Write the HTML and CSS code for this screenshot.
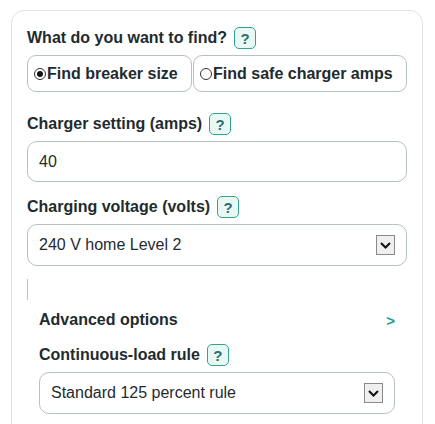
FILE: index.html
```html
<!DOCTYPE html>
<html lang="en">
<head>
<meta charset="utf-8">
<title>Breaker size calculator</title>
<link rel="stylesheet" href="styles.css">
</head>
<body>
<div class="card">
  <div class="label-row">
    <span class="label">What do you want to find?</span>
    <span class="help">?</span>
  </div>
  <div class="choices">
    <label class="choice"><span class="radio checked"></span>Find breaker size</label>
    <label class="choice"><span class="radio"></span>Find safe charger amps</label>
  </div>

  <div class="label-row gap-top-lg">
    <span class="label">Charger setting (amps)</span>
    <span class="help">?</span>
  </div>
  <div class="field">40</div>

  <div class="label-row gap-top">
    <span class="label">Charging voltage (volts)</span>
    <span class="help">?</span>
  </div>
  <div class="field select">
    <span>240 V home Level 2</span>
    <span class="arrow"><svg width="11" height="7" viewBox="0 0 11 7"><path d="M1 1 L5.5 5.5 L10 1" fill="none" stroke="#111" stroke-width="2"/></svg></span>
  </div>

  <div class="divider"></div>

  <div class="advanced">
    <div class="adv-head">
      <span class="label">Advanced options</span>
      <span class="chev">&gt;</span>
    </div>
    <div class="label-row adv-label">
      <span class="label">Continuous-load rule</span>
      <span class="help">?</span>
    </div>
    <div class="field select">
      <span>Standard 125 percent rule</span>
      <span class="arrow"><svg width="11" height="7" viewBox="0 0 11 7"><path d="M1 1 L5.5 5.5 L10 1" fill="none" stroke="#111" stroke-width="2"/></svg></span>
    </div>
  </div>
</div>
</body>
</html>
```
FILE: styles.css
```css
html, body {
  margin: 0;
  padding: 0;
  background: #ffffff;
}
body {
  font-family: "Liberation Sans", Arial, sans-serif;
  color: #1e2b2f;
  font-size: 16px;
}
.card {
  margin: 10px 0 0 11px;
  width: 380px;
  height: 440px;
  border: 1px solid #dde4e2;
  border-radius: 13px;
  padding: 16px 15px 0 15px;
}
.label-row {
  display: flex;
  align-items: center;
  gap: 7px;
  height: 22px;
}
.label {
  font-weight: bold;
  font-size: 16px;
  line-height: 18px;
  color: #1e2b2f;
}
.help {
  width: 20px;
  height: 20px;
  border: 1px solid #2fa58f;
  border-radius: 5px;
  background: #eaf8f4;
  color: #2a6e72;
  font-weight: bold;
  font-size: 15px;
  display: flex;
  align-items: center;
  justify-content: center;
  line-height: 1;
}
.choices {
  display: flex;
  gap: 1px;
  margin-top: 6px;
}
.choice {
  flex: 1 1 auto;
  height: 35px;
  border: 1px solid #b5c1bf;
  border-radius: 9px;
  display: flex;
  align-items: center;
  padding: 0 4px 0 6px;
  font-weight: bold;
  font-size: 16px;
  color: #1e2b2f;
  white-space: nowrap;
}
.radio {
  width: 10px;
  height: 10px;
  border: 1px solid #333;
  border-radius: 50%;
  margin: 0 1px 0 0;
  display: inline-flex;
  align-items: center;
  justify-content: center;
  background: #fff;
  flex: none;
}
.radio.checked::after {
  content: "";
  width: 6px;
  height: 6px;
  border-radius: 50%;
  background: #111;
}
.gap-top-lg { margin-top: 21px; }
.gap-top { margin-top: 14px; }
.field {
  margin-top: 6px;
  height: 39px;
  border: 1px solid #b5c1bf;
  border-radius: 10px;
  padding: 0 11px;
  display: flex;
  align-items: center;
  font-size: 16px;
  color: #1e2b2f;
}
.select {
  justify-content: space-between;
  height: 40px;
}
.arrow {
  width: 17px;
  height: 18px;
  border: 1px solid #8a8a8a;
  background: #efefef;
  display: flex;
  align-items: center;
  justify-content: center;
}
.divider {
  margin-top: 13px;
  width: 1px;
  height: 21px;
  background: #b9c5c3;
}
.advanced {
  padding: 0 12px;
}
.adv-head {
  margin-top: 11px;
  display: flex;
  justify-content: space-between;
  align-items: center;
}
.chev {
  color: #1a9e8a;
  font-weight: bold;
  font-size: 15px;
}
.adv-label {
  margin-top: 15px;
}
```
